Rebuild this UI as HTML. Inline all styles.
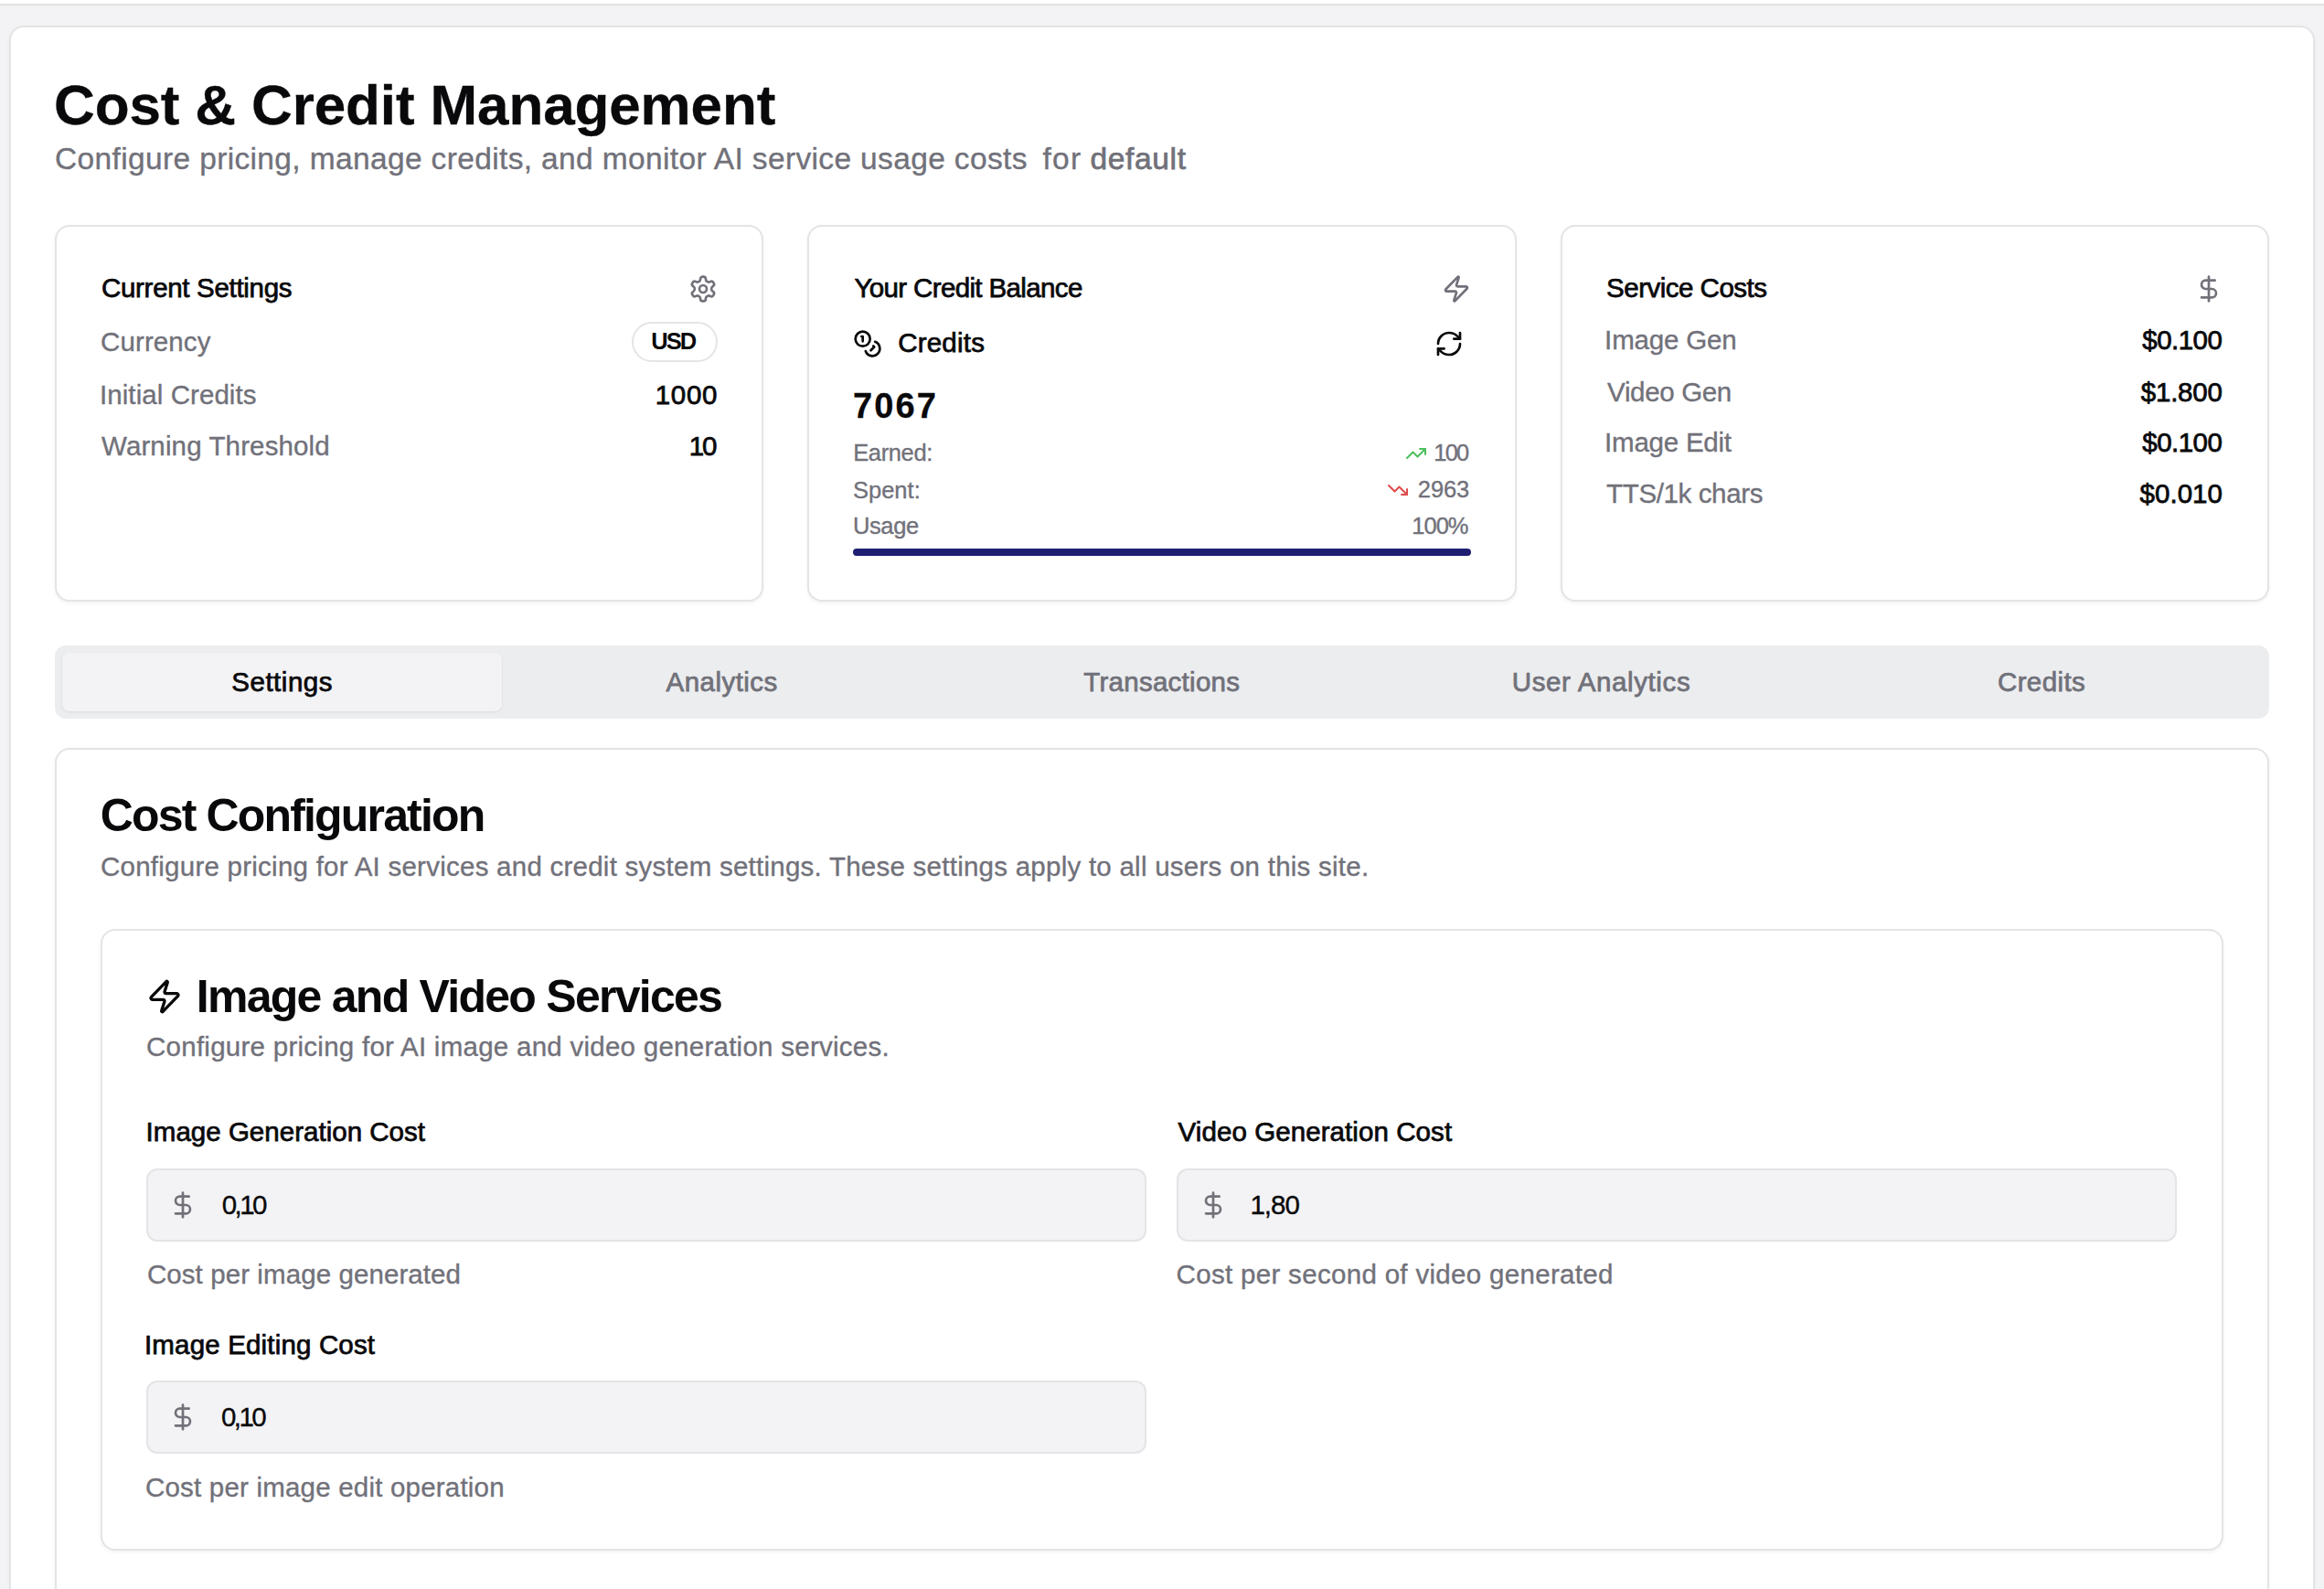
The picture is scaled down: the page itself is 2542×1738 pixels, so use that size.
<!DOCTYPE html>
<html><head><meta charset="utf-8"><title>Cost &amp; Credit Management</title>
<style>
html,body{margin:0;padding:0;width:2542px;height:1738px;overflow:hidden;background:#fff;}
body{position:relative;font-family:"Liberation Sans",sans-serif;}
.b,.t,.i{position:absolute;}
.t{white-space:nowrap;}
</style></head><body>
<div class="b" style="left:0px;top:4px;width:2542px;height:2px;background:#dfe2df;"></div><div class="b" style="left:0px;top:6px;width:2542px;height:1732px;background:#f3f3f5;"></div><div class="b" style="left:10px;top:28px;width:2522px;height:1760px;background:#fff;border:2px solid #e4e4e7;border-radius:16px;box-sizing:border-box;box-shadow:0 2px 4px rgba(0,0,0,0.04);"></div><div class="t" id="title" style="left:59.00px;top:84.32px;font-size:62.00px;line-height:62.00px;font-weight:700;color:#09090b;letter-spacing:-0.130px;-webkit-text-stroke:0.3px #09090b;">Cost &amp; Credit Management</div><div class="t" id="sub1" style="left:60.00px;top:156.64px;font-size:33.50px;line-height:33.50px;font-weight:400;color:#71717a;letter-spacing:0.359px;-webkit-text-stroke:0.35px #71717a;">Configure pricing, manage credits, and monitor AI service usage costs</div><div class="t" id="sub2" style="left:1140.40px;top:156.64px;font-size:33.50px;line-height:33.50px;font-weight:400;color:#71717a;letter-spacing:1.300px;-webkit-text-stroke:0.35px #71717a;">for</div><div class="t" id="sub3" style="left:1192.60px;top:156.64px;font-size:33.50px;line-height:33.50px;font-weight:400;color:#71717a;letter-spacing:0.633px;-webkit-text-stroke:0.75px #71717a;">default</div><div class="b" style="left:60.0px;top:246px;width:775.3px;height:412px;background:#fff;border:2px solid #e4e4e7;border-radius:16px;box-sizing:border-box;box-shadow:0 2px 4px rgba(0,0,0,0.05);"></div><div class="b" style="left:883.3px;top:246px;width:775.3px;height:412px;background:#fff;border:2px solid #e4e4e7;border-radius:16px;box-sizing:border-box;box-shadow:0 2px 4px rgba(0,0,0,0.05);"></div><div class="b" style="left:1706.7px;top:246px;width:775.3px;height:412px;background:#fff;border:2px solid #e4e4e7;border-radius:16px;box-sizing:border-box;box-shadow:0 2px 4px rgba(0,0,0,0.05);"></div><div class="t" id="c1t" style="left:111.00px;top:300.23px;font-size:29.50px;line-height:29.50px;font-weight:400;color:#09090b;letter-spacing:-0.307px;-webkit-text-stroke:0.75px #09090b;">Current Settings</div><svg class="i" style="left:753px;top:300px" width="32" height="32" viewBox="0 0 24 24" fill="none" stroke="#71717a" stroke-width="2" stroke-linecap="round" stroke-linejoin="round"><path d="M12.22 2h-.44a2 2 0 0 0-2 2v.18a2 2 0 0 1-1 1.73l-.43.25a2 2 0 0 1-2 0l-.15-.08a2 2 0 0 0-2.73.73l-.22.38a2 2 0 0 0 .73 2.73l.15.1a2 2 0 0 1 1 1.72v.51a2 2 0 0 1-1 1.74l-.15.09a2 2 0 0 0-.73 2.73l.22.38a2 2 0 0 0 2.73.73l.15-.08a2 2 0 0 1 2 0l.43.25a2 2 0 0 1 1 1.73V20a2 2 0 0 0 2 2h.44a2 2 0 0 0 2-2v-.18a2 2 0 0 1 1-1.73l.43-.25a2 2 0 0 1 2 0l.15.08a2 2 0 0 0 2.73-.73l.22-.39a2 2 0 0 0-.73-2.73l-.15-.08a2 2 0 0 1-1-1.74v-.5a2 2 0 0 1 1-1.74l.15-.09a2 2 0 0 0 .73-2.73l-.22-.38a2 2 0 0 0-2.73-.73l-.15.08a2 2 0 0 1-2 0l-.43-.25a2 2 0 0 1-1-1.73V4a2 2 0 0 0-2-2z"/><circle cx="12" cy="12" r="3"/></svg><div class="t" id="cur" style="left:110.00px;top:359.23px;font-size:29.50px;line-height:29.50px;font-weight:400;color:#71717a;letter-spacing:0.114px;-webkit-text-stroke:0.35px #71717a;">Currency</div><div class="b" style="left:691px;top:352px;width:94px;height:44px;border:2px solid #e4e4e7;border-radius:22px;box-sizing:border-box;"></div><div class="t" id="usd" style="left:736.18px;transform:translateX(-50%);top:361.41px;font-size:25.50px;line-height:25.50px;font-weight:700;color:#09090b;letter-spacing:-1.950px;-webkit-text-stroke:0px #09090b;">USD</div><div class="t" id="ic" style="left:109.00px;top:417.33px;font-size:29.50px;line-height:29.50px;font-weight:400;color:#71717a;letter-spacing:0.071px;-webkit-text-stroke:0.35px #71717a;">Initial Credits</div><div class="t" id="icv" style="right:1756.80px;top:417.33px;font-size:29.50px;line-height:29.50px;font-weight:400;color:#09090b;letter-spacing:0.700px;-webkit-text-stroke:0.75px #09090b;">1000</div><div class="t" id="wt" style="left:111.00px;top:473.03px;font-size:29.50px;line-height:29.50px;font-weight:400;color:#71717a;letter-spacing:0.131px;-webkit-text-stroke:0.35px #71717a;">Warning Threshold</div><div class="t" id="wtv" style="right:1759.50px;top:473.03px;font-size:29.50px;line-height:29.50px;font-weight:400;color:#09090b;letter-spacing:-2.000px;-webkit-text-stroke:0.75px #09090b;">10</div><div class="t" id="c2t" style="left:934.40px;top:299.63px;font-size:29.50px;line-height:29.50px;font-weight:400;color:#09090b;letter-spacing:-0.633px;-webkit-text-stroke:0.75px #09090b;">Your Credit Balance</div><svg class="i" style="left:1577px;top:300px" width="32" height="32" viewBox="0 0 24 24" fill="none" stroke="#71717a" stroke-width="2" stroke-linecap="round" stroke-linejoin="round"><path d="M4 14a1 1 0 0 1-.78-1.63l9.9-10.2a.5.5 0 0 1 .86.46l-1.92 6.02A1 1 0 0 0 13 10h7a1 1 0 0 1 .78 1.63l-9.9 10.2a.5.5 0 0 1-.86-.46l1.92-6.02A1 1 0 0 0 11 14z"/></svg><svg class="i" style="left:933px;top:360px" width="32" height="32" viewBox="0 0 24 24" fill="none" stroke="#09090b" stroke-width="2" stroke-linecap="round" stroke-linejoin="round"><circle cx="8" cy="8" r="6"/><path d="M18.09 10.37A6 6 0 1 1 10.34 18"/><path d="M7 6h1v4"/><path d="m16.71 13.88.7.71-2.82 2.82"/></svg><div class="t" id="cred" style="left:982.20px;top:360.43px;font-size:29.50px;line-height:29.50px;font-weight:400;color:#09090b;letter-spacing:0.217px;-webkit-text-stroke:0.75px #09090b;">Credits</div><svg class="i" style="left:1569px;top:360px" width="32" height="32" viewBox="0 0 24 24" fill="none" stroke="#09090b" stroke-width="2" stroke-linecap="round" stroke-linejoin="round"><path d="M3 12a9 9 0 0 1 9-9 9.75 9.75 0 0 1 6.74 2.74L21 8"/><path d="M21 3v5h-5"/><path d="M21 12a9 9 0 0 1-9 9 9.75 9.75 0 0 1-6.74-2.74L3 16"/><path d="M8 16H3v5"/></svg><div class="t" id="bal" style="left:933.00px;top:425.03px;font-size:38.00px;line-height:38.00px;font-weight:700;color:#09090b;letter-spacing:2.100px;-webkit-text-stroke:0.3px #09090b;">7067</div><div class="t" id="earn" style="left:933.20px;top:482.91px;font-size:25.50px;line-height:25.50px;font-weight:400;color:#71717a;letter-spacing:-0.367px;-webkit-text-stroke:0.35px #71717a;">Earned:</div><svg class="i" style="left:1537px;top:484px" width="24" height="24" viewBox="0 0 24 24" fill="none" stroke="#4cbf5c" stroke-width="2" stroke-linecap="round" stroke-linejoin="round"><polyline points="22 7 13.5 15.5 8.5 10.5 2 17"/><polyline points="16 7 22 7 22 13"/></svg><div class="t" id="earnv" style="right:936.50px;top:483.41px;font-size:25.50px;line-height:25.50px;font-weight:400;color:#71717a;letter-spacing:-1.800px;-webkit-text-stroke:0.35px #71717a;">100</div><div class="t" id="spent" style="left:933.00px;top:523.91px;font-size:25.50px;line-height:25.50px;font-weight:400;color:#71717a;letter-spacing:0.000px;-webkit-text-stroke:0.35px #71717a;">Spent:</div><svg class="i" style="left:1517px;top:524px" width="24" height="24" viewBox="0 0 24 24" fill="none" stroke="#de4b4b" stroke-width="2" stroke-linecap="round" stroke-linejoin="round"><polyline points="22 17 13.5 8.5 8.5 13.5 2 7"/><polyline points="16 17 22 17 22 11"/></svg><div class="t" id="spentv" style="right:934.77px;top:522.91px;font-size:25.50px;line-height:25.50px;font-weight:400;color:#71717a;letter-spacing:-0.067px;-webkit-text-stroke:0.35px #71717a;">2963</div><div class="t" id="usage" style="left:933.00px;top:562.81px;font-size:25.50px;line-height:25.50px;font-weight:400;color:#71717a;letter-spacing:-0.400px;-webkit-text-stroke:0.35px #71717a;">Usage</div><div class="t" id="usagev" style="right:936.50px;top:562.81px;font-size:25.50px;line-height:25.50px;font-weight:400;color:#71717a;letter-spacing:-1.000px;-webkit-text-stroke:0.35px #71717a;">100%</div><div class="b" style="left:933px;top:600px;width:676px;height:8px;background:#1e1e72;border-radius:4px;"></div><div class="t" id="c3t" style="left:1757.10px;top:299.63px;font-size:29.50px;line-height:29.50px;font-weight:400;color:#09090b;letter-spacing:-0.508px;-webkit-text-stroke:0.75px #09090b;">Service Costs</div><svg class="i" style="left:2400px;top:300px" width="32" height="32" viewBox="0 0 24 24" fill="none" stroke="#71717a" stroke-width="2" stroke-linecap="round" stroke-linejoin="round"><line x1="12" x2="12" y1="2" y2="22"/><path d="M17 5H9.5a3.5 3.5 0 0 0 0 7h5a3.5 3.5 0 0 1 0 7H6"/></svg><div class="t" id="s0" style="left:1755.10px;top:357.23px;font-size:29.50px;line-height:29.50px;font-weight:400;color:#71717a;letter-spacing:-0.162px;-webkit-text-stroke:0.35px #71717a;">Image Gen</div><div class="t" id="s0v" style="right:111.62px;top:357.23px;font-size:29.50px;line-height:29.50px;font-weight:400;color:#09090b;letter-spacing:-0.520px;-webkit-text-stroke:0.75px #09090b;">$0.100</div><div class="t" id="s1" style="left:1758.10px;top:413.73px;font-size:29.50px;line-height:29.50px;font-weight:400;color:#71717a;letter-spacing:-0.337px;-webkit-text-stroke:0.35px #71717a;">Video Gen</div><div class="t" id="s1v" style="right:111.32px;top:413.73px;font-size:29.50px;line-height:29.50px;font-weight:400;color:#09090b;letter-spacing:-0.220px;-webkit-text-stroke:0.75px #09090b;">$1.800</div><div class="t" id="s2" style="left:1755.10px;top:469.43px;font-size:29.50px;line-height:29.50px;font-weight:400;color:#71717a;letter-spacing:-0.233px;-webkit-text-stroke:0.35px #71717a;">Image Edit</div><div class="t" id="s2v" style="right:111.62px;top:469.43px;font-size:29.50px;line-height:29.50px;font-weight:400;color:#09090b;letter-spacing:-0.520px;-webkit-text-stroke:0.75px #09090b;">$0.100</div><div class="t" id="s3" style="left:1757.10px;top:524.53px;font-size:29.50px;line-height:29.50px;font-weight:400;color:#71717a;letter-spacing:-0.373px;-webkit-text-stroke:0.35px #71717a;">TTS/1k chars</div><div class="t" id="s3v" style="right:111.08px;top:524.53px;font-size:29.50px;line-height:29.50px;font-weight:400;color:#09090b;letter-spacing:0.020px;-webkit-text-stroke:0.75px #09090b;">$0.010</div><div class="b" style="left:60px;top:706px;width:2422px;height:80px;background:#ecedef;border-radius:12px;"></div><div class="b" style="left:68px;top:714px;width:481px;height:64px;background:#f3f3f5;border-radius:8px;box-shadow:0 1px 3px rgba(0,0,0,0.08);"></div><div class="t" id="tab0" style="left:308.66px;transform:translateX(-50%);top:730.63px;font-size:29.50px;line-height:29.50px;font-weight:400;color:#09090b;letter-spacing:0.514px;-webkit-text-stroke:0.75px #09090b;">Settings</div><div class="t" id="tab1" style="left:789.68px;transform:translateX(-50%);top:730.63px;font-size:29.50px;line-height:29.50px;font-weight:400;color:#71717a;letter-spacing:0.463px;-webkit-text-stroke:0.75px #71717a;">Analytics</div><div class="t" id="tab2" style="left:1270.78px;transform:translateX(-50%);top:730.63px;font-size:29.50px;line-height:29.50px;font-weight:400;color:#71717a;letter-spacing:0.264px;-webkit-text-stroke:0.75px #71717a;">Transactions</div><div class="t" id="tab3" style="left:1751.55px;transform:translateX(-50%);top:730.63px;font-size:29.50px;line-height:29.50px;font-weight:400;color:#71717a;letter-spacing:0.608px;-webkit-text-stroke:0.75px #71717a;">User Analytics</div><div class="t" id="tab4" style="left:2233.04px;transform:translateX(-50%);top:730.63px;font-size:29.50px;line-height:29.50px;font-weight:400;color:#71717a;letter-spacing:0.383px;-webkit-text-stroke:0.75px #71717a;">Credits</div><div class="b" style="left:60px;top:818px;width:2422px;height:1000px;background:#fff;border:2px solid #e4e4e7;border-radius:16px;box-sizing:border-box;box-shadow:0 2px 4px rgba(0,0,0,0.05);"></div><div class="t" id="cc" style="left:109.80px;top:867.17px;font-size:50.00px;line-height:50.00px;font-weight:700;color:#09090b;letter-spacing:-1.841px;-webkit-text-stroke:0px #09090b;">Cost Configuration</div><div class="t" id="ccs" style="left:110.00px;top:933.03px;font-size:29.50px;line-height:29.50px;font-weight:400;color:#71717a;letter-spacing:0.248px;-webkit-text-stroke:0.35px #71717a;">Configure pricing for AI services and credit system settings. These settings apply to all users on this site.</div><div class="b" style="left:110px;top:1016px;width:2322px;height:680px;background:#fff;border:2px solid #e4e4e7;border-radius:16px;box-sizing:border-box;box-shadow:0 2px 4px rgba(0,0,0,0.05);"></div><svg class="i" style="left:160px;top:1070px" width="40" height="40" viewBox="0 0 24 24" fill="none" stroke="#09090b" stroke-width="2" stroke-linecap="round" stroke-linejoin="round"><path d="M4 14a1 1 0 0 1-.78-1.63l9.9-10.2a.5.5 0 0 1 .86.46l-1.92 6.02A1 1 0 0 0 13 10h7a1 1 0 0 1 .78 1.63l-9.9 10.2a.5.5 0 0 1-.86-.46l1.92-6.02A1 1 0 0 0 11 14z"/></svg><div class="t" id="ivs" style="left:214.80px;top:1065.47px;font-size:50.00px;line-height:50.00px;font-weight:700;color:#09090b;letter-spacing:-1.739px;-webkit-text-stroke:0px #09090b;">Image and Video Services</div><div class="t" id="ivss" style="left:160.00px;top:1130.43px;font-size:29.50px;line-height:29.50px;font-weight:400;color:#71717a;letter-spacing:0.263px;-webkit-text-stroke:0.35px #71717a;">Configure pricing for AI image and video generation services.</div><div class="t" id="f1l" style="left:159.60px;top:1223.03px;font-size:29.50px;line-height:29.50px;font-weight:400;color:#09090b;letter-spacing:0.020px;-webkit-text-stroke:0.75px #09090b;">Image Generation Cost</div><div class="b" style="left:160px;top:1278px;width:1094px;height:80px;background:#f3f3f5;border:2px solid #e4e4e7;border-radius:12px;box-sizing:border-box;"></div><svg class="i" style="left:184px;top:1302px" width="32" height="32" viewBox="0 0 24 24" fill="none" stroke="#71717a" stroke-width="2" stroke-linecap="round" stroke-linejoin="round"><line x1="12" x2="12" y1="2" y2="22"/><path d="M17 5H9.5a3.5 3.5 0 0 0 0 7h5a3.5 3.5 0 0 1 0 7H6"/></svg><div class="t" id="f1v" style="left:242.70px;top:1303.23px;font-size:29.50px;line-height:29.50px;font-weight:400;color:#09090b;letter-spacing:-2.533px;-webkit-text-stroke:0.35px #09090b;">0,10</div><div class="t" id="f1h" style="left:160.90px;top:1379.03px;font-size:29.50px;line-height:29.50px;font-weight:400;color:#71717a;letter-spacing:0.087px;-webkit-text-stroke:0.35px #71717a;">Cost per image generated</div><div class="t" id="f2l" style="left:1288.60px;top:1223.03px;font-size:29.50px;line-height:29.50px;font-weight:400;color:#09090b;letter-spacing:0.080px;-webkit-text-stroke:0.75px #09090b;">Video Generation Cost</div><div class="b" style="left:1287px;top:1278px;width:1094px;height:80px;background:#f3f3f5;border:2px solid #e4e4e7;border-radius:12px;box-sizing:border-box;"></div><svg class="i" style="left:1311px;top:1302px" width="32" height="32" viewBox="0 0 24 24" fill="none" stroke="#71717a" stroke-width="2" stroke-linecap="round" stroke-linejoin="round"><line x1="12" x2="12" y1="2" y2="22"/><path d="M17 5H9.5a3.5 3.5 0 0 0 0 7h5a3.5 3.5 0 0 1 0 7H6"/></svg><div class="t" id="f2v" style="left:1367.40px;top:1303.23px;font-size:29.50px;line-height:29.50px;font-weight:400;color:#09090b;letter-spacing:-1.000px;-webkit-text-stroke:0.35px #09090b;">1,80</div><div class="t" id="f2h" style="left:1286.60px;top:1379.03px;font-size:29.50px;line-height:29.50px;font-weight:400;color:#71717a;letter-spacing:0.315px;-webkit-text-stroke:0.35px #71717a;">Cost per second of video generated</div><div class="t" id="f3l" style="left:158.00px;top:1456.03px;font-size:29.50px;line-height:29.50px;font-weight:400;color:#09090b;letter-spacing:0.165px;-webkit-text-stroke:0.75px #09090b;">Image Editing Cost</div><div class="b" style="left:160px;top:1510px;width:1094px;height:80px;background:#f3f3f5;border:2px solid #e4e4e7;border-radius:12px;box-sizing:border-box;"></div><svg class="i" style="left:184px;top:1534px" width="32" height="32" viewBox="0 0 24 24" fill="none" stroke="#71717a" stroke-width="2" stroke-linecap="round" stroke-linejoin="round"><line x1="12" x2="12" y1="2" y2="22"/><path d="M17 5H9.5a3.5 3.5 0 0 0 0 7h5a3.5 3.5 0 0 1 0 7H6"/></svg><div class="t" id="f3v" style="left:241.90px;top:1535.23px;font-size:29.50px;line-height:29.50px;font-weight:400;color:#09090b;letter-spacing:-2.533px;-webkit-text-stroke:0.35px #09090b;">0,10</div><div class="t" id="f3h" style="left:159.00px;top:1611.53px;font-size:29.50px;line-height:29.50px;font-weight:400;color:#71717a;letter-spacing:0.200px;-webkit-text-stroke:0.35px #71717a;">Cost per image edit operation</div>
<script>(function(){var w=window.innerWidth;if(w&&Math.abs(w-2542)>2){document.documentElement.style.zoom=(w/2542);}})();</script>
</body></html>
